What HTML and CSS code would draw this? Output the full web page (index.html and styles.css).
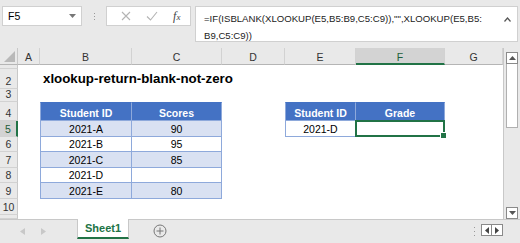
FILE: index.html
```html
<!DOCTYPE html>
<html lang="en">

<head>
  <meta charset="UTF-8">
  <meta name="viewport" content="width=device-width, initial-scale=1.0">
  <title>xlookup-return-blank-not-zero</title>
  <link rel="stylesheet" href="styles.css">
</head>

<body>
  <div class="app">
    <!-- formula bar -->
    <div class="fbar">
      <div class="namebox">
        <span>F5</span>
        <svg class="caret" width="7" height="4" viewBox="0 0 7 4"><path d="M0 0h7L3.5 4z" fill="#777"/></svg>
      </div>
      <div class="grip"><i></i><i></i><i></i></div>
      <div class="fbtns">
        <svg width="10" height="10" viewBox="0 0 10 10"><path d="M1 1l8 8M9 1l-8 8" stroke="#b4b4b4" stroke-width="1.1"/></svg>
        <svg width="12" height="10" viewBox="0 0 12 10"><path d="M1 5.5l3.5 3.5L11 1" stroke="#b4b4b4" stroke-width="1.1" fill="none"/></svg>
        <span class="fx">f<small>x</small></span>
      </div>
      <div class="formula">
        <div class="ftext">=IF(ISBLANK(XLOOKUP(E5,B5:B9,C5:C9)),"",XLOOKUP(E5,B5:<br>B9,C5:C9))</div>
        <svg class="up" width="7" height="5" viewBox="0 0 7 5"><path d="M0.5 4.5L3.5 1l3 3.5" stroke="#555" stroke-width="1.2" fill="none"/></svg>
      </div>
    </div>

    <!-- grid -->
    <div class="sheet">
      <div class="vscroll">
        <div class="sbtn"><svg width="7" height="4" viewBox="0 0 7 4"><path d="M0 4h7L3.5 0z" fill="#555"/></svg></div>
        <div class="thumb"></div>
        <div class="track"></div>
        <div class="sbtn"><svg width="7" height="4" viewBox="0 0 7 4"><path d="M0 0h7L3.5 4z" fill="#555"/></svg></div>
      </div>

      <div class="corner"><svg width="11" height="11" viewBox="0 0 11 11"><path d="M11 0v11H0z" fill="#b9b9b9"/></svg></div>
      <div class="ch">A</div>
      <div class="ch">B</div>
      <div class="ch">C</div>
      <div class="ch">D</div>
      <div class="ch">E</div>
      <div class="ch sel">F</div>
      <div class="ch">G</div>

      <div class="rh small"></div>
      <div class="c"></div><div class="c"></div><div class="c"></div><div class="c"></div><div class="c"></div><div class="c"></div><div class="c"></div>

      <div class="rh">2</div>
      <div class="c"></div>
      <div class="c title">xlookup-return-blank-not-zero</div>
      <div class="c"></div><div class="c"></div><div class="c"></div><div class="c"></div><div class="c"></div>

      <div class="rh">3</div>
      <div class="c"></div><div class="c"></div><div class="c"></div><div class="c"></div><div class="c"></div><div class="c"></div><div class="c"></div>

      <div class="rh">4</div>
      <div class="c"></div>
      <div class="c t th left">Student ID</div>
      <div class="c t th">Scores</div>
      <div class="c"></div>
      <div class="c t th left">Student ID</div>
      <div class="c t th">Grade</div>
      <div class="c"></div>

      <div class="rh sel">5</div>
      <div class="c"></div>
      <div class="c t band left">2021-A</div>
      <div class="c t band">90</div>
      <div class="c"></div>
      <div class="c t left">2021-D</div>
      <div class="c t active"></div>
      <div class="c"></div>

      <div class="rh">6</div>
      <div class="c"></div>
      <div class="c t left">2021-B</div>
      <div class="c t">95</div>
      <div class="c"></div><div class="c"></div><div class="c"></div><div class="c"></div>

      <div class="rh">7</div>
      <div class="c"></div>
      <div class="c t band left">2021-C</div>
      <div class="c t band">85</div>
      <div class="c"></div><div class="c"></div><div class="c"></div><div class="c"></div>

      <div class="rh">8</div>
      <div class="c"></div>
      <div class="c t left">2021-D</div>
      <div class="c t"></div>
      <div class="c"></div><div class="c"></div><div class="c"></div><div class="c"></div>

      <div class="rh">9</div>
      <div class="c"></div>
      <div class="c t band left">2021-E</div>
      <div class="c t band">80</div>
      <div class="c"></div><div class="c"></div><div class="c"></div><div class="c"></div>

      <div class="rh">10</div>
      <div class="c"></div><div class="c"></div><div class="c"></div><div class="c"></div><div class="c"></div><div class="c"></div><div class="c"></div>

      <div class="rh"></div>
      <div class="c"></div><div class="c"></div><div class="c"></div><div class="c"></div><div class="c"></div><div class="c"></div><div class="c"></div>
    </div>

    <!-- sheet tabs -->
    <div class="tabs">
      <div class="nav">
        <svg width="5" height="7" viewBox="0 0 5 7"><path d="M5 0v7L0 3.5z" fill="#c8c8c8"/></svg>
        <svg width="5" height="7" viewBox="0 0 5 7"><path d="M0 0v7l5-3.5z" fill="#c8c8c8"/></svg>
      </div>
      <div class="tab">Sheet1</div>
      <svg class="add" width="14" height="14" viewBox="0 0 14 14">
        <circle cx="7" cy="7" r="6" stroke="#777" fill="none"/>
        <path d="M7 3.5v7M3.5 7h7" stroke="#777"/>
      </svg>
      <div class="spacer"></div>
      <div class="grip v"><i></i><i></i><i></i></div>
      <div class="hbtns">
        <div class="hbtn"><svg width="4" height="7" viewBox="0 0 4 7"><path d="M4 0v7L0 3.5z" fill="#444"/></svg></div>
        <div class="hbtn"><svg width="4" height="7" viewBox="0 0 4 7"><path d="M0 0v7l4-3.5z" fill="#444"/></svg></div>
      </div>
    </div>
  </div>
</body>

</html>
```

FILE: styles.css
```css
body {
  margin: 0;
  font-family: 'Liberation Sans', Arial, sans-serif;
  color: #000;
}

.app {
  width: 520px;
  height: 243px;
  background-color: #e9e9e9;
  overflow: hidden;
}

/* formula bar */
.fbar {
  height: 48px;
  box-sizing: border-box;
  padding: 6px 2px 0 2px;
  display: flex;
  align-items: flex-start;
}

.namebox {
  width: 80px;
  height: 20px;
  box-sizing: border-box;
  background-color: #fff;
  border: 1px solid #d0d0d0;
  display: flex;
  align-items: center;
  justify-content: space-between;
  padding: 0 4px 0 5px;
  font-size: 10.5px;
}

.namebox .caret {
  margin-right: 1px;
}

.grip {
  width: 24px;
  height: 20px;
  display: flex;
  flex-direction: column;
  align-items: center;
  justify-content: center;
  gap: 2px;
}

.grip i {
  display: block;
  width: 1px;
  height: 1px;
  background-color: #999;
}

.fbtns {
  width: 85px;
  height: 20px;
  box-sizing: border-box;
  background-color: #fff;
  border: 1px solid #d0d0d0;
  display: flex;
  align-items: center;
  justify-content: space-around;
  padding: 0 2px 0 6px;
}

.fbtns .fx {
  font-family: 'Liberation Serif', serif;
  font-style: italic;
  font-size: 12px;
  color: #444;
}

.fbtns .fx small {
  font-size: 9px;
}

.formula {
  margin-left: 4px;
  width: 323px;
  height: 36px;
  box-sizing: border-box;
  background-color: #fff;
  border: 1px solid #d0d0d0;
  display: flex;
  justify-content: space-between;
  padding: 3px 6px 0 8px;
}

.ftext {
  font-size: 9.6px;
  line-height: 17px;
  color: #222;
}

.formula .up {
  margin-top: 7px;
}

/* sheet grid */
.sheet {
  height: 171px;
  background-color: #fff;
  display: grid;
  grid-template-columns: 18px 22px 92px 90px 63px 71px 89px 58px 17px;
  grid-template-rows: 17px 4px 20px 13px 19px 16px 15px 16px 15px 16px 16px 4px;
  font-size: 10.5px;
}

.vscroll {
  grid-column: 9;
  grid-row: 1 / -1;
  background-color: #e9e9e9;
  border-left: 1px solid #c8c8c8;
  display: flex;
  flex-direction: column;
  align-items: center;
  padding-top: 4px;
}

.sbtn {
  width: 12px;
  height: 12px;
  box-sizing: border-box;
  background-color: #fff;
  border: 1px solid #8a8a8a;
  display: flex;
  align-items: center;
  justify-content: center;
}

.vscroll .thumb {
  width: 12px;
  height: 64px;
  box-sizing: border-box;
  background-color: #fff;
  border: 1px solid #b0b0b0;
  border-top: none;
}

.vscroll .track {
  flex: 1;
}

.vscroll .sbtn:last-child {
  margin-bottom: 0;
}

.corner {
  background-color: #e9e9e9;
  border-right: 1px solid #c8c8c8;
  border-bottom: 1px solid #b5b5b5;
  display: flex;
  align-items: flex-end;
  justify-content: flex-end;
  padding: 0 2px 2px 0;
}

.ch {
  background-color: #e9e9e9;
  border-right: 1px solid #d2d2d2;
  border-bottom: 1px solid #b5b5b5;
  display: flex;
  align-items: center;
  justify-content: center;
  color: #333;
  padding-top: 2px;
}

.ch.sel {
  background-color: #d3d3d3;
  border-bottom: 2px solid #217346;
  color: #1e5e3a;
}

.rh {
  background-color: #e9e9e9;
  border-right: 1px solid #c8c8c8;
  border-bottom: 1px solid #d2d2d2;
  display: flex;
  align-items: flex-end;
  justify-content: center;
  color: #333;
  line-height: 13px;
}

.rh.small {
  font-size: 0;
}

.rh.sel {
  background-color: #d3d3d3;
  border-right: 2px solid #217346;
  color: #1e5e3a;
}

.c {
  display: flex;
  align-items: flex-end;
  justify-content: center;
  white-space: nowrap;
  line-height: 14px;
}

.c.title {
  justify-content: flex-start;
  padding: 0 0 2px 3px;
  font-weight: bold;
  font-size: 13.3px;
  line-height: 16px;
}

/* excel table style */
.t {
  border-right: 1px solid #8ea9db;
  border-bottom: 1px solid #8ea9db;
}

.t.left {
  border-left: 1px solid #8ea9db;
}

.t.th {
  background-color: #4472c4;
  color: #fff;
  font-weight: bold;
  border-top: 1px solid #4472c4;
}

.t.band {
  background-color: #d9e1f2;
}

.t.active {
  position: relative;
  border: 2px solid #217346;
  margin: -1px 0 0 -1px;
}

.t.active::after {
  content: "";
  position: absolute;
  right: -4px;
  bottom: -4px;
  width: 5px;
  height: 5px;
  background-color: #217346;
  border: 1px solid #fff;
}

/* sheet tabs */
.tabs {
  height: 24px;
  border-top: 1px solid #c8c8c8;
  box-sizing: border-box;
  display: flex;
  align-items: flex-start;
}

.tabs .nav {
  width: 77px;
  height: 22px;
  display: flex;
  align-items: center;
  justify-content: flex-start;
  gap: 16px;
  padding-left: 20px;
  box-sizing: border-box;
}

.tab {
  width: 52px;
  height: 20px;
  box-sizing: border-box;
  margin-top: -1px;
  background-color: #fff;
  border-left: 1px solid #c8c8c8;
  border-right: 1px solid #c8c8c8;
  border-bottom: 2px solid #217346;
  color: #217346;
  font-weight: bold;
  font-size: 11px;
  display: flex;
  align-items: center;
  justify-content: center;
}

.tabs .add {
  margin: 4px 0 0 24px;
}

.spacer {
  flex: 1;
}

.grip.v {
  width: 10px;
  height: 22px;
  gap: 3px;
}

.hbtns {
  display: flex;
  margin: 4px 17px 0 2px;
}

.hbtn {
  width: 11px;
  height: 12px;
  box-sizing: border-box;
  background-color: #fff;
  border: 1px solid #8a8a8a;
  display: flex;
  align-items: center;
  justify-content: center;
}

.hbtn + .hbtn {
  border-left: none;
}
```
